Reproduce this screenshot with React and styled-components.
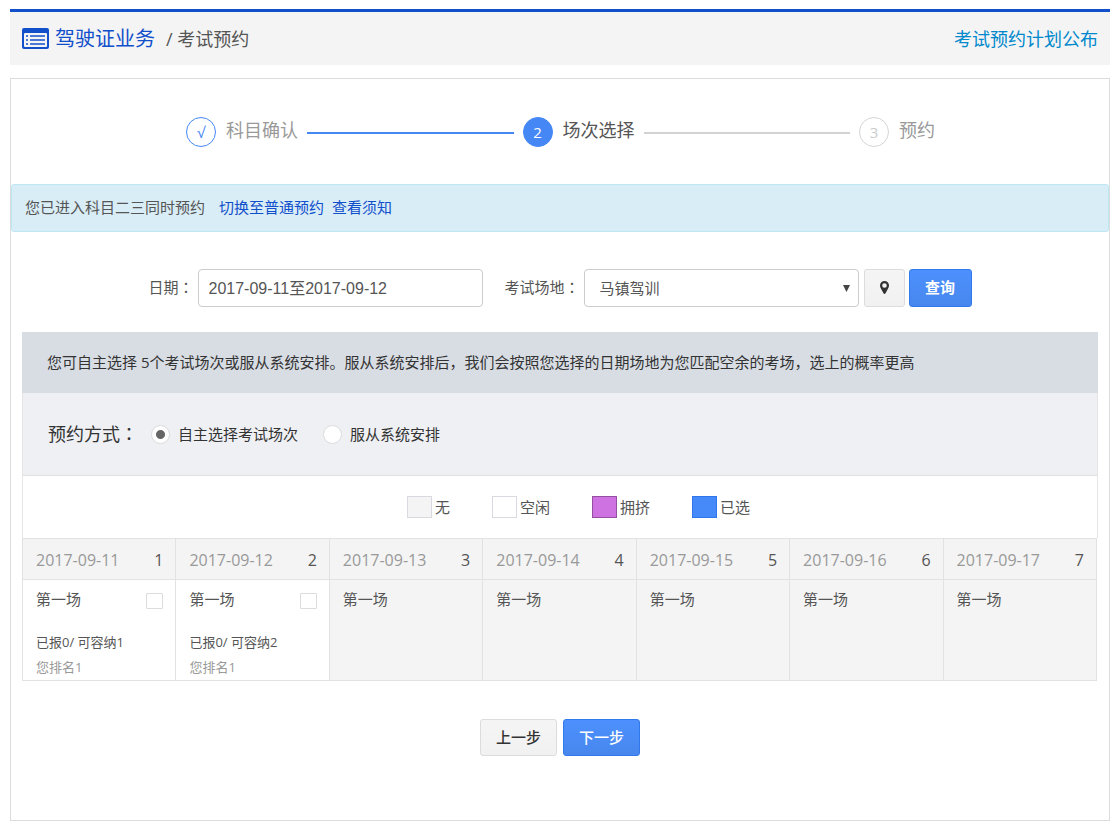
import React, { useState } from "react";
import styled, { createGlobalStyle, css } from "styled-components";

const GlobalStyle = createGlobalStyle`
  *, *::before, *::after { box-sizing: border-box; }
  body {
    margin: 0;
    padding: 9px 7px 5px 10px;
    background: #fff;
    color: #555;
    font-family: "Open Sans", "Noto Sans CJK SC", sans-serif;
    font-size: 15px;
    font-weight: 400;
    line-height: 20px;
  }
  input, button, select { font: inherit; color: inherit; margin: 0; }
  a { text-decoration: none; }
`;

const Header = styled.header`
  display: flex;
  align-items: center;
  justify-content: space-between;
  height: 56px;
  padding: 0 12px;
  border-top: 3px solid #114fcb;
  background: #f4f4f4;
  font-size: 18px;
`;

const Crumbs = styled.nav`
  display: flex;
  align-items: center;
  gap: 6px;
`;

const Title = styled.h1`
  margin: 0 5px 0 0;
  color: #114fcb;
  font-size: 20px;
  font-weight: 400;
`;

const HeaderLink = styled.a`
  color: #0088cc;
`;

const Card = styled.main`
  margin-top: 13px;
  padding-bottom: 64px;
  border: 1px solid #dcdcdc;
`;

const Steps = styled.ol`
  display: flex;
  align-items: center;
  gap: 9px;
  margin: 0;
  padding: 38px 174px 37px 175px;
  list-style: none;
`;

const Step = styled.li`
  display: flex;
  align-items: center;
  gap: 10px;
  color: ${(p) => (p.$state === "current" ? "#555" : "#999")};
  font-size: 18px;
`;

const StepLabel = styled.span`
  padding-bottom: 4px;
`;

const stepColors = {
  done: css`
    border-color: #4487f5;
    color: #4487f5;
  `,
  current: css`
    border-color: #4487f5;
    background: #4487f5;
    color: #fff;
  `,
  todo: css`
    border-color: #d5d5d5;
    color: #ccc;
  `,
};

const StepMark = styled.span`
  display: flex;
  align-items: center;
  justify-content: center;
  width: 30px;
  height: 30px;
  padding-bottom: 1px;
  border: 1px solid;
  border-radius: 50%;
  font-size: 15px;
  ${(p) => stepColors[p.$state]}
`;

const StepLine = styled.li`
  flex: 1;
  height: 2px;
  margin-top: 2px;
  background: ${(p) => (p.$done ? "#4487f5" : "#d2d2d2")};
`;

const Alert = styled.div`
  display: flex;
  align-items: center;
  gap: 8px;
  height: 48px;
  padding: 0 13px 2px;
  border: 1px solid #bce8f1;
  border-radius: 3px;
  background: #d9edf6;
`;

const AlertText = styled.span`
  margin-right: 6px;
`;

const AlertLink = styled.a`
  color: #114fcb;
`;

const SearchForm = styled.form`
  display: flex;
  justify-content: center;
  align-items: center;
  gap: 4px;
  margin: 37px 0 25px;
`;

const Wide = styled.span`
  font-family: "Noto Sans CJK TC", sans-serif;
`;

const Field = styled.div`
  display: flex;
  align-items: center;
  gap: 4px;
  margin-right: ${(p) => p.$after || 0}px;
`;

const FieldLabel = styled.label`
  padding-bottom: 2px;
`;

const DateInput = styled.input`
  width: 285px;
  height: 38px;
  padding: 0 10px 2px;
  border: 1px solid #ccc;
  border-radius: 4px;
  font-family: "Liberation Sans", "Noto Sans CJK SC", sans-serif;
  font-size: 16px;
`;

const SelectBox = styled.div`
  display: grid;
  align-items: center;
  width: 275px;
  height: 38px;
  border: 1px solid #ccc;
  border-radius: 4px;

  & > * { grid-area: 1 / 1; }
`;

const Select = styled.select`
  width: 100%;
  height: 36px;
  padding: 0 15px;
  border: 0;
  background: transparent;
  appearance: none;
`;

const Arrow = styled.svg`
  justify-self: end;
  margin-right: 8px;
  pointer-events: none;
`;

const Button = styled.button`
  display: inline-flex;
  align-items: center;
  justify-content: center;
  min-width: ${(p) => p.$width || 77}px;
  height: ${(p) => p.$height || 38}px;
  padding: 0 15px 2px;
  border: 1px solid #dcdcdc;
  border-radius: 3px;
  background: linear-gradient(#f5f5f5, #f1f1f1);
  color: #333;
  font-weight: 500;
  ${(p) =>
    p.$primary &&
    css`
      border-color: #3079ed;
      background: linear-gradient(#4d90fe, #4787ed);
      color: #fff;
      font-weight: ${p.$bold ? 700 : 500};
    `}
`;

const Schedule = styled.section`
  margin: 0 11px;
`;

const Notice = styled.p`
  margin: 0;
  padding: 20px 25px 21px;
  background: #d8dde4;
  color: #333;
`;

const Panel = styled.div`
  border: 1px solid #e5e5e5;
  border-width: 0 1px;
`;

const Mode = styled.fieldset`
  display: flex;
  align-items: center;
  height: 83px;
  margin: 0;
  padding: 0 25px;
  border: 0;
  border-bottom: 1px solid #e2e2e2;
  background: #eff0f4;
  color: #333;
`;

const ModeTitle = styled.span`
  margin-right: 13px;
  padding-bottom: 2px;
  font-size: 18px;
`;

const RadioLabel = styled.label`
  display: flex;
  align-items: center;
  gap: 8px;
  margin-right: 25px;
`;

const Radio = styled.input`
  width: 19px;
  height: 19px;
  border: 1px solid #dcdcdc;
  border-radius: 50%;
  background: #fff;
  appearance: none;

  &:checked {
    background: radial-gradient(circle, #666 4px, #fff 5px);
  }
`;

const Legend = styled.ul`
  display: flex;
  justify-content: center;
  align-items: center;
  gap: 42px;
  height: 62px;
  margin: 0;
  padding: 0 0 0 37px;
  list-style: none;
`;

const LegendItem = styled.li`
  display: flex;
  align-items: center;
  gap: 3px;
`;

const Swatch = styled.span`
  width: 25px;
  height: 22px;
  border: 1px solid ${(p) => p.$edge};
  background: ${(p) => p.$fill};
`;

const Table = styled.table`
  width: calc(100% - 1px);
  border-collapse: collapse;
  table-layout: fixed;
`;

const DayHead = styled.th`
  height: 41px;
  padding: 1px 12px 0 13px;
  border: 1px solid #e2e2e2;
  background: #f4f4f4;
  font-size: 16px;
  font-weight: 400;
`;

const Spread = styled.div`
  display: flex;
  align-items: center;
  justify-content: space-between;
`;

const DateText = styled.span`
  color: #999;
`;

const Slot = styled.td`
  height: 101px;
  padding: 9px 12px 0 13px;
  border: 1px solid #e2e2e2;
  background: ${(p) => (p.$open ? "#fff" : "#f4f4f4")};
  vertical-align: top;
`;

const Checkbox = styled.input`
  width: 17px;
  height: 16px;
  margin-top: 4px;
  border: 1px solid #dcdcdc;
  border-radius: 1px;
  background: #fff;
  appearance: none;

  &:checked { background: #4487f5; }
`;

const Quota = styled.div`
  margin-top: 21px;
  font-size: 13px;
  line-height: 25px;
`;

const Rank = styled.div`
  color: #999;
  font-size: 13px;
  line-height: 25px;
`;

const Actions = styled.div`
  display: flex;
  justify-content: center;
  gap: 6px;
  margin-top: 38px;
`;

const days = [
  { date: "2017-09-11", room: 1, rank: 1 },
  { date: "2017-09-12", room: 2, rank: 1 },
  { date: "2017-09-13" },
  { date: "2017-09-14" },
  { date: "2017-09-15" },
  { date: "2017-09-16" },
  { date: "2017-09-17" },
];

const legend = [
  { name: "无", fill: "#f4f4f4", edge: "#d9dae0" },
  { name: "空闲", fill: "#fff", edge: "#d9dae0" },
  { name: "拥挤", fill: "#cd72e0", edge: "#94509f" },
  { name: "已选", fill: "#468af9", edge: "#2f76ec" },
];

const ListIcon = () => (
  <svg width="27" height="21" viewBox="0 0 27 21" aria-hidden="true">
    <rect width="27" height="21" rx="2" fill="#114fcb" />
    <rect x="2" y="5" width="23" height="14" rx="1" fill="#f4f4f4" />
    <path
      d="M4 8h2M4 12h2M4 16h2M8 8h15M8 12h15M8 16h15"
      stroke="#114fcb"
      strokeWidth="1.600"
    />
  </svg>
);

const PinIcon = () => (
  <svg width="9" height="13" viewBox="0 0 9 13" aria-hidden="true">
    <path
      fill="#333"
      fillRule="evenodd"
      d="M4.500 0A4.500 4.500 0 0 0 0 4.500C0 6 .7 7 1.300 8.200L3.600 12.500Q4.500 13.400 5.400 12.500L7.700 8.200C8.300 7 9 6 9 4.500A4.500 4.500 0 0 0 4.500 0ZM4.500 2.200A2.300 2.300 0 1 1 4.500 6.800A2.300 2.300 0 0 1 4.500 2.200Z"
    />
  </svg>
);

export default function App() {
  const [mode, setMode] = useState("self");
  const [range, setRange] = useState("2017-09-11至2017-09-12");

  return (
    <>
      <GlobalStyle />
      <Header>
        <Crumbs>
          <ListIcon />
          <Title>驾驶证业务</Title>
          <span>/ 考试预约</span>
        </Crumbs>
        <HeaderLink href="#plan">考试预约计划公布</HeaderLink>
      </Header>

      <Card>
        <Steps>
          <Step $state="done">
            <StepMark $state="done">√</StepMark>
            <StepLabel>科目确认</StepLabel>
          </Step>
          <StepLine $done aria-hidden="true" />
          <Step $state="current" aria-current="step">
            <StepMark $state="current">2</StepMark>
            <StepLabel>场次选择</StepLabel>
          </Step>
          <StepLine aria-hidden="true" />
          <Step $state="todo">
            <StepMark $state="todo">3</StepMark>
            <StepLabel>预约</StepLabel>
          </Step>
        </Steps>

        <Alert>
          <AlertText>您已进入科目二三同时预约</AlertText>
          <AlertLink href="#normal">切换至普通预约</AlertLink>
          <AlertLink href="#rules">查看须知</AlertLink>
        </Alert>

        <SearchForm onSubmit={(e) => e.preventDefault()}>
          <Field $after={18}>
            <FieldLabel htmlFor="range">日期<Wide>：</Wide></FieldLabel>
            <DateInput id="range" value={range} onChange={(e) => setRange(e.target.value)} />
          </Field>
          <Field $after={1}>
            <FieldLabel htmlFor="site">考试场地<Wide>：</Wide></FieldLabel>
            <SelectBox>
              <Select id="site">
                <option>马镇驾训</option>
              </Select>
              <Arrow width="7" height="7" viewBox="0 0 7 7" aria-hidden="true">
                <path d="M0 0h7L3.500 7z" fill="#444" />
              </Arrow>
            </SelectBox>
          </Field>
          <Button type="button" $width={41} aria-label="地图">
            <PinIcon />
          </Button>
          <Button type="submit" $width={63} $primary $bold>查询</Button>
        </SearchForm>

        <Schedule>
          <Notice>
            您可自主选择 5个考试场次或服从系统安排。服从系统安排后，我们会按照您选择的日期场地为您匹配空余的考场，选上的概率更高
          </Notice>
          <Panel>
            <Mode aria-labelledby="mode-title">
              <ModeTitle id="mode-title">预约方式<Wide>：</Wide></ModeTitle>
              <RadioLabel>
                <Radio type="radio" name="mode" checked={mode === "self"} onChange={() => setMode("self")} />
                自主选择考试场次
              </RadioLabel>
              <RadioLabel>
                <Radio type="radio" name="mode" checked={mode === "auto"} onChange={() => setMode("auto")} />
                服从系统安排
              </RadioLabel>
            </Mode>
            <Legend>
              {legend.map((l) => (
                <LegendItem key={l.name}>
                  <Swatch $fill={l.fill} $edge={l.edge} />
                  {l.name}
                </LegendItem>
              ))}
            </Legend>
          </Panel>
          <Table>
            <thead>
              <tr>
                {days.map((d, i) => (
                  <DayHead key={d.date} scope="col">
                    <Spread>
                      <DateText>{d.date}</DateText>
                      <span>{i + 1}</span>
                    </Spread>
                  </DayHead>
                ))}
              </tr>
            </thead>
            <tbody>
              <tr>
                {days.map((d) => (
                  <Slot key={d.date} $open={Boolean(d.room)}>
                    <Spread>
                      <label htmlFor={d.room && d.date}>第一场</label>
                      {d.room && <Checkbox type="checkbox" id={d.date} />}
                    </Spread>
                    {d.room && (
                      <>
                        <Quota>已报0/ 可容纳{d.room}</Quota>
                        <Rank>您排名{d.rank}</Rank>
                      </>
                    )}
                  </Slot>
                ))}
              </tr>
            </tbody>
          </Table>
        </Schedule>

        <Actions>
          <Button type="button" $height={37}>上一步</Button>
          <Button type="button" $height={37} $primary>下一步</Button>
        </Actions>
      </Card>
    </>
  );
}
